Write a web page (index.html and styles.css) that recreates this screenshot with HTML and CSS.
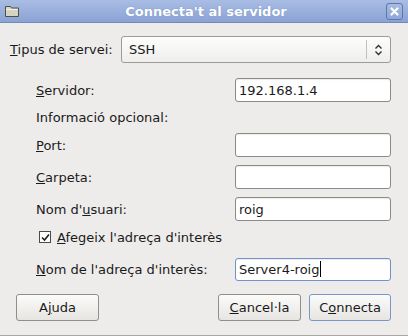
FILE: index.html
```html
<!DOCTYPE html>
<html lang="ca">
<head>
  <meta charset="UTF-8">
  <title>Connecta't al servidor</title>
  <link rel="stylesheet" href="styles.css">
</head>
<body>
  <div class="window">
    <div class="titlebar">
      <svg class="folder" width="16" height="16" viewBox="0 0 16 16">
        <path d="M1.5 3.5 h5 l1 1.5 h7 v8.5 h-13 z" fill="#d6d3c3" stroke="#4f4f4a"/>
        <path d="M2 6.5 h12" stroke="#f4f2e8"/>
      </svg>
      <div class="title">Connecta't al servidor</div>
      <div class="close">
        <svg width="9" height="9" viewBox="0 0 9 9">
          <path d="M1.5 1.5 L7.5 7.5 M7.5 1.5 L1.5 7.5" stroke="#ffffff" stroke-width="2.2" stroke-linecap="round"/>
        </svg>
      </div>
    </div>

    <div class="content">
      <div class="type-row">
        <span class="type-label"><u>T</u>ipus de servei:</span>
        <div class="combo">
          <span class="combo-value">SSH</span>
          <span class="combo-sep"></span>
          <svg class="combo-arrow" width="9" height="12" viewBox="0 0 9 12">
            <path d="M1.5 4.5 L4.5 1.5 L7.5 4.5 M1.5 7.5 L4.5 10.5 L7.5 7.5" fill="none" stroke="#2e2e2e" stroke-width="1.3"/>
          </svg>
        </div>
      </div>

      <div class="form">
        <div class="row">
          <span class="label"><u>S</u>ervidor:</span>
          <div class="entry">192.168.1.4</div>
        </div>
        <div class="row info">
          <span class="label">Informació opcional:</span>
        </div>
        <div class="row">
          <span class="label"><u>P</u>ort:</span>
          <div class="entry"></div>
        </div>
        <div class="row">
          <span class="label"><u>C</u>arpeta:</span>
          <div class="entry"></div>
        </div>
        <div class="row">
          <span class="label">Nom d'<u>u</u>suari:</span>
          <div class="entry">roig</div>
        </div>
        <div class="check-row">
          <span class="checkbox">
            <svg width="9" height="9" viewBox="0 0 9 9">
              <path d="M1 4.5 L3.5 7 L8 1.5" fill="none" stroke="#1e1e1e" stroke-width="1.6"/>
            </svg>
          </span>
          <span><u>A</u>fegeix l'adreça d'interès</span>
        </div>
        <div class="row">
          <span class="label"><u>N</u>om de l'adreça d'interès:</span>
          <div class="entry focus">Server4-roig<span class="caret"></span></div>
        </div>
      </div>

      <div class="buttons">
        <button class="btn">A<u>j</u>uda</button>
        <div class="spacer"></div>
        <button class="btn"><u>C</u>ancel·la</button>
        <button class="btn default">C<u>o</u>nnecta</button>
      </div>
    </div>
  </div>
</body>
</html>
```

FILE: styles.css
```css
* {
  box-sizing: border-box;
}

body {
  margin: 0;
  font-family: 'DejaVu Sans', sans-serif;
  font-size: 13px;
  color: #1a1a1a;
  background-color: #edeceb;
}

.window {
  width: 408px;
  height: 336px;
  display: flex;
  flex-direction: column;
  background-color: #edeceb;
  border-bottom: 1px solid #a8a7a4;
}

.titlebar {
  height: 23px;
  display: flex;
  align-items: center;
  padding: 0 5px 0 4px;
  background: linear-gradient(#a9bde4, #8aa3d4);
  border-bottom: 1px solid #7389b9;
}

.folder {
  flex: none;
}

.title {
  flex: 1;
  text-align: center;
  color: #ffffff;
  font-weight: bold;
  font-size: 13px;
  padding-left: 6px;
  text-shadow: 0 0 1px #6a82b5;
}

.close {
  width: 17px;
  height: 17px;
  border: 1px solid #5e78ad;
  border-radius: 3px;
  background: linear-gradient(#a7bbe2, #8ea7d6);
  display: flex;
  align-items: center;
  justify-content: center;
}

.content {
  flex: 1;
  display: flex;
  flex-direction: column;
  padding: 13px 17px 0 10px;
}

.type-row {
  display: flex;
  align-items: center;
  height: 27px;
}

.type-label {
  width: 111px;
}

.combo {
  flex: 1;
  height: 27px;
  display: flex;
  align-items: center;
  border: 1px solid #9c9b98;
  border-radius: 3px;
  background: linear-gradient(#fdfdfd, #eeeeec);
  padding-left: 7px;
}

.combo-value {
  flex: 1;
}

.combo-sep {
  width: 1px;
  height: 19px;
  background-color: #c2c1be;
  margin-right: 7px;
}

.combo-arrow {
  margin-right: 7px;
}

.form {
  display: flex;
  flex-direction: column;
  padding-left: 26px;
  margin-top: 15px;
  gap: 8px;
}

.row {
  display: flex;
  align-items: center;
  justify-content: space-between;
  height: 24px;
}

.row.info {
  height: 15px;
}

.entry {
  width: 156px;
  height: 24px;
  background-color: #ffffff;
  border: 1px solid #8b8a87;
  border-radius: 3px;
  box-shadow: inset 0 1px 1px rgba(0, 0, 0, 0.08);
  padding: 0 3px;
  display: flex;
  align-items: center;
}

.entry.focus {
  border-color: #6f93c9;
  height: 23px;
}

.caret {
  display: inline-block;
  width: 1px;
  height: 16px;
  background-color: #000000;
  margin-left: 1px;
}

.check-row {
  display: flex;
  align-items: center;
  height: 16px;
  padding-left: 3px;
  gap: 6px;
  margin-bottom: 4px;
}

.checkbox {
  width: 12px;
  height: 12px;
  border: 1px solid #4a4a48;
  background-color: #ffffff;
  display: flex;
  align-items: center;
  justify-content: center;
}

.buttons {
  display: flex;
  gap: 8px;
  margin-top: 13px;
  padding-left: 6px;
}

.spacer {
  flex: 1;
}

.btn {
  font-family: 'DejaVu Sans', sans-serif;
  font-size: 13px;
  color: #1a1a1a;
  width: 83px;
  height: 27px;
  border: 1px solid #8f8e8b;
  border-radius: 3px;
  background: linear-gradient(#fbfbfa, #e6e5e2);
  padding: 0;
}

.btn.default {
  border-color: #7a95c6;
  width: 82px;
}
```
